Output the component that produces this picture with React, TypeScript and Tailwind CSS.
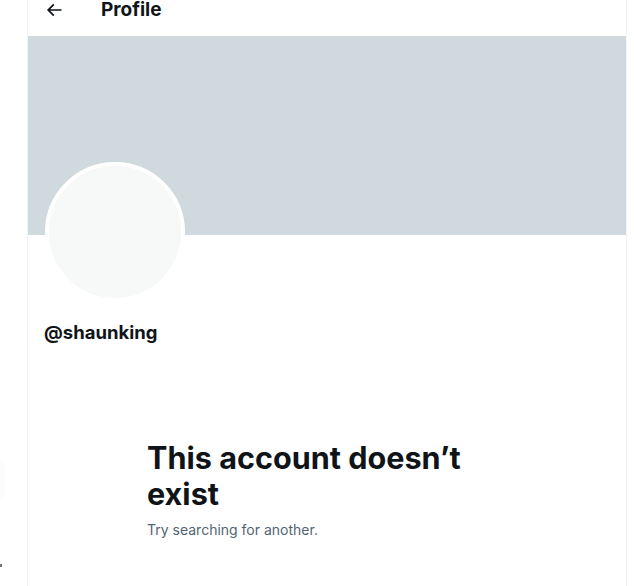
export default function App() {
    return (
        <div className="relative w-[634px] h-[586px] overflow-hidden bg-white" style={{fontFamily: "Inter, 'Noto Sans', sans-serif"}}>
            {/* bits of the sidebar that are cut off at the left edge */}
            <div className="absolute left-[-30px] top-[455px] w-[36px] h-[50px] rounded-full bg-[#fcfcfc]" />
            <div className="absolute left-0 top-[564px] w-[2px] h-[3px] bg-[#777]" />
            <div className="ml-[27px] w-[600px] h-full border-x border-[#eff3f4] flex flex-col">
                <div className="h-[36px] px-4 pb-4 flex items-center">
                    <div className="w-[57px] flex items-center">
                        <svg viewBox="0 0 24 24" className="w-5 h-5 fill-[#0f1419]">
                            <path d="M7.414 13l5.043 5.04-1.414 1.42L3.586 12l7.457-7.46 1.414 1.42L7.414 11H21v2H7.414z" />
                        </svg>
                    </div>
                    <h2 className="text-[19px] leading-[20px] font-bold text-[#0f1419]">Profile</h2>
                </div>
                <div className="h-[199px] bg-[#cfd9de]" />
                <div className="px-4">
                    <div className="-mt-[73px] ml-px w-[140px] h-[140px] rounded-full border-4 border-white bg-[#f7f9f9]" />
                    <div className="mt-[18px] text-[18.5px] leading-6 font-bold text-[#0f1419]">@shaunking</div>
                </div>
                <div className="mt-[96px] mx-auto w-[400px] px-5">
                    <h1 className="text-[30.6px] leading-9 font-bold text-[#0f1419]">This account doesn’t exist</h1>
                    <p className="mt-2 text-[14px] leading-5 text-[#536471]">Try searching for another.</p>
                </div>
            </div>
        </div>
    )
}
